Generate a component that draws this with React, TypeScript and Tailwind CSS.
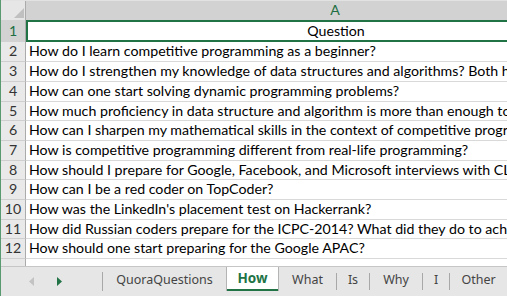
import React from "react";

const rows: { n: number; text: string; h: string }[] = [
  { n: 2, text: "How do I learn competitive programming as a beginner?", h: "h-[20px]" },
  { n: 3, text: "How do I strengthen my knowledge of data structures and algorithms? Both hard and soft skills", h: "h-[20px]" },
  { n: 4, text: "How can one start solving dynamic programming problems?", h: "h-[20px]" },
  { n: 5, text: "How much proficiency in data structure and algorithm is more than enough to crack interviews?", h: "h-[19px]" },
  { n: 6, text: "How can I sharpen my mathematical skills in the context of competitive programming?", h: "h-[20px]" },
  { n: 7, text: "How is competitive programming different from real-life programming?", h: "h-[20px]" },
  { n: 8, text: "How should I prepare for Google, Facebook, and Microsoft interviews with CLRS?", h: "h-[19px]" },
  { n: 9, text: "How can I be a red coder on TopCoder?", h: "h-[20px]" },
  { n: 10, text: "How was the LinkedIn's placement test on Hackerrank?", h: "h-[20px]" },
  { n: 11, text: "How did Russian coders prepare for the ICPC-2014? What did they do to achieve that result?", h: "h-[19px]" },
  { n: 12, text: "How should one start preparing for the Google APAC?", h: "h-[20px]" },
];

const cellFont = { fontFamily: "Lato, 'Liberation Sans', sans-serif" } as const;

export default function App() {
  return (
    <div
      className="w-[507px] h-[296px] overflow-hidden bg-white flex flex-col border-l border-[#5a9a72] text-[14.2px] text-black"
      style={cellFont}
    >
      {/* column header row */}
      <div className="flex h-[20px] shrink-0 border-t border-[#e2e2e2]">
        <div className="w-[25px] shrink-0 bg-[#e6e6e6] border-r border-[#ababab] relative">
          <svg className="absolute left-0 top-0" width="25" height="19" viewBox="0 0 25 19">
            <polygon points="13,17 23,17 23,7" fill="#c0c0c0" />
          </svg>
        </div>
        <div className="w-[618px] shrink-0 bg-[#d2d2d2] text-[#1e6e42] flex items-center justify-center leading-none">
          A
        </div>
      </div>
      {/* row 1 */}
      <div className="flex h-[22px] shrink-0">
        <div className="w-[25px] shrink-0 bg-[#d2d2d2] border-r border-[#ababab] flex items-center justify-center text-[#1e6e42] leading-none">
          1
        </div>
        <div className="w-[618px] shrink-0 border-y-2 border-l-2 border-[#217346] flex items-center justify-center leading-none whitespace-nowrap">
          Question
        </div>
      </div>
      {rows.map((r) => (
        <div key={r.n} className={`flex shrink-0 ${r.h}`}>
          <div className="w-[25px] shrink-0 bg-[#e9e9e9] border-r border-b border-r-[#ababab] border-b-[#cfcfcf] flex items-center justify-center text-[#333] leading-none">
            {r.n}
          </div>
          <div className="flex-1 border-b border-[#d9d9d9] flex items-center pl-[3px] leading-none whitespace-nowrap overflow-hidden">
            {r.text}
          </div>
        </div>
      ))}
      {/* partial row 13 */}
      <div className="flex h-[7px] shrink-0">
        <div className="w-[25px] shrink-0 bg-[#e9e9e9] border-r border-[#ababab]" />
        <div className="flex-1" />
      </div>
      {/* sheet tab bar */}
      <div
        className="flex-1 flex border-t border-[#c6c6c6] bg-[#e6e6e6] text-[12.5px] text-[#444]"
        style={{ fontFamily: "'Noto Sans', 'Open Sans', sans-serif" }}
      >
        <div className="w-[101px] shrink-0 flex items-center">
          <svg className="ml-[28px]" width="5" height="9" viewBox="0 0 5 9">
            <polygon points="5,0 5,9 0,4.5" fill="#c3c3c3" />
          </svg>
          <svg className="ml-[23px]" width="5" height="9" viewBox="0 0 5 9">
            <polygon points="0,0 0,9 5,4.5" fill="#217346" />
          </svg>
        </div>
        <div className="w-px h-[19px] mt-[5px] bg-[#a8a8a8] shrink-0" />
        <div className="w-[123px] shrink-0 flex items-center justify-center pb-[2px]">QuoraQuestions</div>
        <div className="w-[53px] shrink-0 h-[24px] bg-white border-x border-[#b4b4b4] flex flex-col">
          <div className="flex-1 flex items-center justify-center font-bold text-[#217346] text-[13.5px]">How</div>
          <div className="h-[2px] bg-[#217346]" />
        </div>
        <div className="w-[57px] shrink-0 flex items-center justify-center pb-[2px]">What</div>
        <div className="w-px h-[17px] mt-[6px] bg-[#a8a8a8] shrink-0" />
        <div className="w-[32px] shrink-0 flex items-center justify-center pb-[2px]">Is</div>
        <div className="w-px h-[17px] mt-[6px] bg-[#a8a8a8] shrink-0" />
        <div className="w-[52px] shrink-0 flex items-center justify-center pb-[2px]">Why</div>
        <div className="w-px h-[17px] mt-[6px] bg-[#a8a8a8] shrink-0" />
        <div className="w-[26px] shrink-0 flex items-center justify-center pb-[2px]">I</div>
        <div className="w-px h-[17px] mt-[6px] bg-[#a8a8a8] shrink-0" />
        <div className="w-[57px] shrink-0 flex items-center justify-center pb-[2px]">Other</div>
      </div>
    </div>
  );
}
